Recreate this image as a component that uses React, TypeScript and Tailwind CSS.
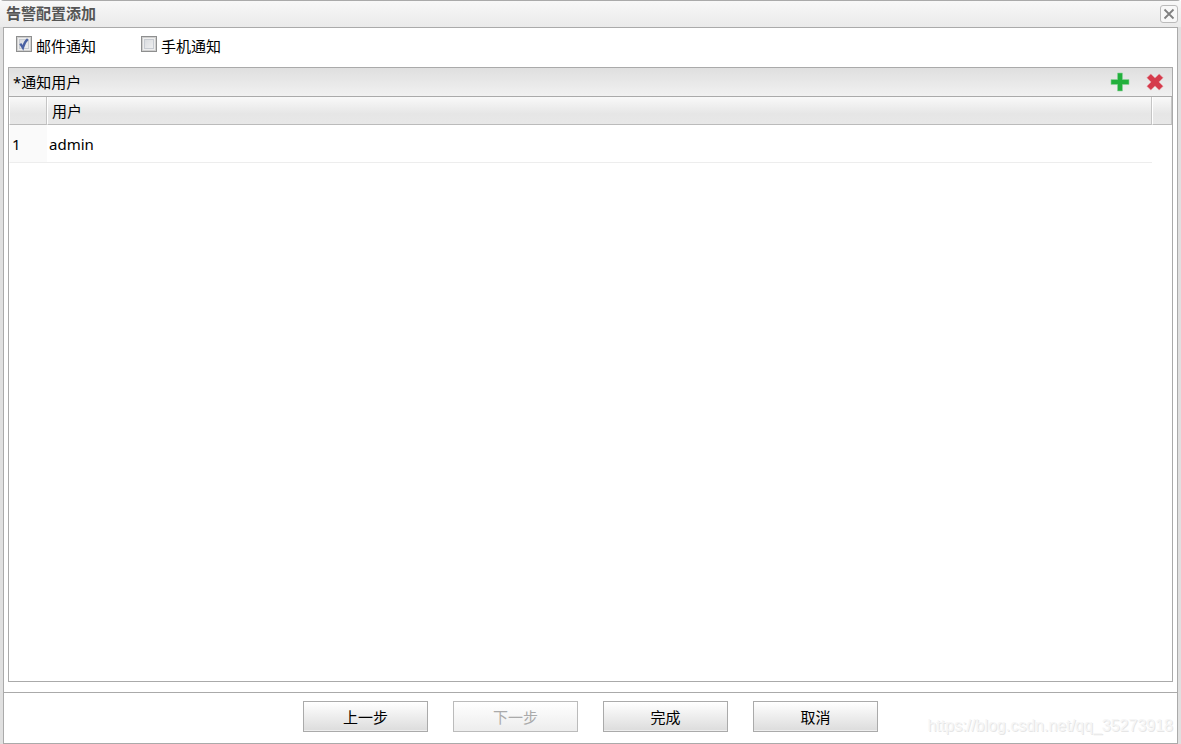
import { useState } from "react";

type NotifyUser = {
  id: number;
  name: string;
};

const initialUsers: NotifyUser[] = [{ id: 1, name: "admin" }];

type NotifyCheckboxProps = {
  id: string;
  label: string;
  checked: boolean;
  onChange: (checked: boolean) => void;
};

function NotifyCheckbox({ id, label, checked, onChange }: NotifyCheckboxProps) {
  return (
    <div className="flex items-start gap-1">
      <span className="grid size-4">
        <input
          id={id}
          type="checkbox"
          checked={checked}
          onChange={(event) => onChange(event.target.checked)}
          className="col-start-1 row-start-1 size-4 appearance-none border border-[#8e8f8f] bg-linear-to-br from-[#d3d6da] to-[#f6f6f6] shadow-[inset_0_0_0_1px_#d0d0d0,inset_0_0_0_2px_#eee,inset_0_0_0_3px_#c8ccd2]"
        />
        {checked && (
          <svg
            viewBox="0 0 16 16"
            className="pointer-events-none col-start-1 row-start-1 size-4"
            aria-hidden="true"
          >
            <path
              d="M4.3 7.6 6.9 11.8C7.6 8.8 9 5.6 11.8 3.2"
              fill="none"
              stroke="#4b62a3"
              strokeWidth="2.3"
            />
          </svg>
        )}
      </span>
      <label htmlFor={id} className="leading-5">
        {label}
      </label>
    </div>
  );
}

type StepButtonProps = {
  label: string;
  disabled?: boolean;
};

function StepButton({ label, disabled }: StepButtonProps) {
  return (
    <button
      type="button"
      disabled={disabled}
      className="h-[31px] w-[125px] border border-[#aaa] bg-linear-to-b from-white to-[#dcdcdc] leading-5 shadow-[inset_0_-1px_0_#eee] disabled:border-[#bbb] disabled:to-[#ededed] disabled:text-[#aaa]"
    >
      {label}
    </button>
  );
}

export default function App() {
  const [mail, setMail] = useState(true);
  const [phone, setPhone] = useState(false);
  const [users, setUsers] = useState(initialUsers);

  function addUser() {
    setUsers([...users, { id: users.length + 1, name: "admin" }]);
  }

  return (
    <div className="relative flex min-h-screen flex-col rounded-t border-t border-[#aaa] bg-[#e0e0e0] font-['Noto_Sans','Noto_Sans_CJK_SC',sans-serif] text-[15px] text-black">
      <header className="flex h-[26px] items-start justify-between bg-linear-to-b from-[#f8f8f8] to-[#eaeaea] pt-0.5 pr-[3px] pl-1.5">
        <h1 className="leading-5 font-bold text-[#555]">告警配置添加</h1>
        <button
          type="button"
          aria-label="关闭"
          className="mt-0.5 flex size-[18px] items-center justify-center rounded-[3px] border border-[#bbb] bg-[#f8f8f8]"
        >
          <svg viewBox="0 0 12 12" className="size-3" aria-hidden="true">
            <path
              d="M1.5 1.5 10.5 10.5M10.5 1.5 1.5 10.5"
              stroke="#808080"
              strokeWidth="1.8"
            />
          </svg>
        </button>
      </header>

      <main className="mx-[3px] flex grow flex-col border border-[#aaa] bg-white">
        <div className="flex gap-[45px] px-3 pt-2 pb-[11px]">
          <NotifyCheckbox
            id="notify-mail"
            label="邮件通知"
            checked={mail}
            onChange={setMail}
          />
          <NotifyCheckbox
            id="notify-phone"
            label="手机通知"
            checked={phone}
            onChange={setPhone}
          />
        </div>

        <section className="mx-1 mb-2.5 grow border border-[#aaa]">
          <div className="flex h-[29px] items-center justify-between border-b border-[#aaa] bg-linear-to-b from-[#dfdfdf] to-[#f1f1f1] pr-2 pl-1">
            <h2 className="leading-5">*通知用户</h2>
            <div className="flex items-center gap-4">
              <button type="button" aria-label="添加" onClick={addUser}>
                <svg viewBox="0 0 20 20" className="size-5" aria-hidden="true">
                  <path
                    d="M7.5 1h5v6.5H19v5h-6.5V19h-5v-6.5H1v-5h6.5z"
                    fill="#22b03c"
                    stroke="#8fd49c"
                    strokeWidth="0.6"
                  />
                </svg>
              </button>
              <button
                type="button"
                aria-label="删除"
                onClick={() => setUsers(users.slice(0, -1))}
              >
                <svg viewBox="0 0 18 18" className="size-[18px]" aria-hidden="true">
                  <path
                    d="M4.8 0.9 9 5.1l4.2-4.2 3.9 3.9L12.9 9l4.2 4.2-3.9 3.9L9 12.9l-4.2 4.2-3.9-3.9L5.1 9 0.9 4.8z"
                    fill="#d53b4c"
                    stroke="#e79aa2"
                    strokeWidth="0.6"
                    strokeLinejoin="round"
                  />
                </svg>
              </button>
            </div>
          </div>

          <table className="w-full table-fixed border-separate border-spacing-0 text-left">
            <colgroup>
              <col className="w-[38px]" />
              <col />
              <col className="w-5" />
            </colgroup>
            <thead>
              <tr className="h-7 bg-linear-to-b from-[#f9f9f9] via-[#e6e6e6] via-60% to-[#e8e8e8]">
                <th className="border-r border-b border-l border-r-[#c5c5c5] border-b-[#bbb] border-l-white p-0" />
                <th className="border-r border-b border-l border-r-[#c5c5c5] border-b-[#bbb] border-l-white px-1 py-0 leading-5 font-normal">
                  用户
                </th>
                <th className="border-r border-b border-l border-r-[#c5c5c5] border-b-[#bbb] border-l-white p-0" />
              </tr>
            </thead>
            <tbody>
              {users.map((user) => (
                <tr key={user.id} className="h-[38px]">
                  <td className="border-b border-l border-b-[#ededed] border-l-white bg-[#fafafa] px-0.5 py-0 leading-5">
                    {user.id}
                  </td>
                  <td className="border-b border-[#ededed] px-0.5 py-0 leading-5">
                    {user.name}
                  </td>
                  <td />
                </tr>
              ))}
            </tbody>
          </table>
        </section>

        <footer className="flex justify-center gap-[25px] border-t border-[#aaa] pt-2 pb-[11px]">
          <StepButton label="上一步" />
          <StepButton label="下一步" disabled />
          <StepButton label="完成" />
          <StepButton label="取消" />
        </footer>
      </main>

      <p className="pointer-events-none absolute right-2 bottom-1.5 font-['Liberation_Sans',sans-serif] text-base text-[#f6f6f6] [text-shadow:1px_1px_0_#e6e6e6]">
        https://blog.csdn.net/qq_35273918
      </p>
    </div>
  );
}
